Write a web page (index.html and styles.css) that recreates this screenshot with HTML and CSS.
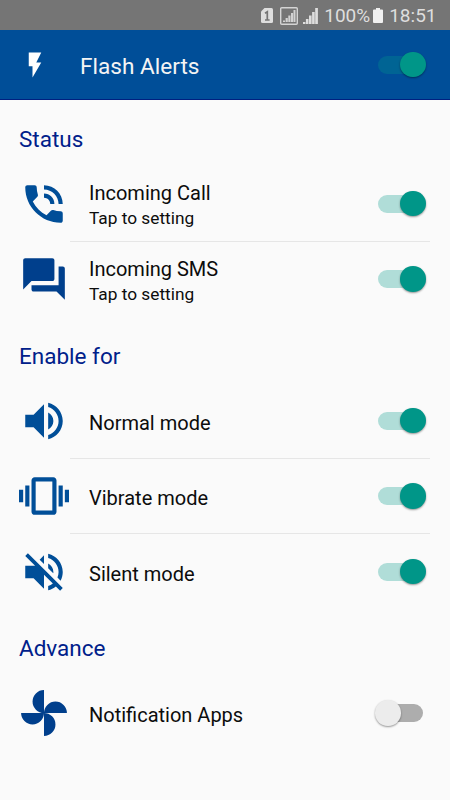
FILE: index.html
```html
<!DOCTYPE html>
<html lang="en">
<head>
<meta charset="utf-8">
<title>Flash Alerts</title>
<link rel="stylesheet" href="styles.css">
</head>
<body>
<div class="statusbar">
  <svg class="sim" viewBox="0 0 12 15"><path d="M3.500 0H10.500Q12 0 12 1.500V13.500Q12 15 10.500 15H1.500Q0 15 0 13.500V3.500Z" fill="#dedede"/><path d="M4 5.200L6.300 3.800V12M4 12H8.600" fill="none" stroke="#757575" stroke-width="1.700"/></svg>
  <svg class="boxed" viewBox="0 0 18 18"><rect x=".7" y=".7" width="16.600" height="16.600" rx="1" fill="none" stroke="#d4d4d4" stroke-width="1.400"/><path d="M3 15v-1.500h2v1.500zM5.600 15v-4h2.200v4zM8.300 15v-6.500h2.200v6.500zM11 15v-9h2.100v9zM13.500 15v-12h2v12z" fill="#d2d2d2"/></svg>
  <svg class="signal" viewBox="0 0 15 16"><path d="M0 16v-2h2.400v2zM2.900 16v-5h2.600v5zM6 16v-8.500h2.600v8.500zM9.100 16v-12h2.600v12zM12.200 16v-16h2.700v16z" fill="#dedede"/></svg>
  <span class="percent">100%</span>
  <svg class="battery" viewBox="0 0 10 15"><path d="M3 0h4v1.500h2q1 0 1 1v11.500q0 1-1 1h-8q-1 0-1-1v-11.500q0-1 1-1h2z" fill="#f0f0f0"/></svg>
  <span class="clock">18:51</span>
</div>
<header class="appbar">
  <svg class="flash" viewBox="0 0 24 24"><path d="M7 2v11h3v9l7-12h-4l4-8z"/></svg>
  <h1>Flash Alerts</h1>
  <span class="switch on"></span>
</header>
<main>
  <h2>Status</h2>
  <section class="group">
    <div class="row">
      <svg class="icon" viewBox="0 0 24 24"><path d="M20 15.500c-1.250 0-2.450-.2-3.570-.57-.35-.11-.74-.03-1.020.24l-2.200 2.200c-2.830-1.440-5.150-3.750-6.590-6.590l2.200-2.210c.28-.26.36-.65.25-1C8.700 6.450 8.500 5.250 8.500 4c0-.55-.45-1-1-1H4c-.55 0-1 .45-1 1 0 9.390 7.610 17 17 17 .55 0 1-.45 1-1v-3.500c0-.55-.45-1-1-1zM19 12h2c0-4.970-4.030-9-9-9v2c3.870 0 7 3.130 7 7zm-4 0h2c0-2.760-2.240-5-5-5v2c1.660 0 3 1.340 3 3z"/></svg>
      <div class="label"><p class="title">Incoming Call</p><p class="sub">Tap to setting</p></div>
      <span class="switch on"></span>
    </div>
    <div class="row">
      <svg class="icon deep" viewBox="0 0 24 24"><path d="M21 6h-2v9H6v2c0 .55.45 1 1 1h11l4 4V7c0-.55-.45-1-1-1zm-4 6V3c0-.55-.45-1-1-1H3c-.55 0-1 .45-1 1v14l4-4h10c.55 0 1-.45 1-1z"/></svg>
      <div class="label"><p class="title">Incoming SMS</p><p class="sub">Tap to setting</p></div>
      <span class="switch on"></span>
    </div>
  </section>
  <h2>Enable for</h2>
  <section class="group">
    <div class="row">
      <svg class="icon" viewBox="0 0 24 24"><path d="M3 9v6h4l5 5V4L7 9H3zm13.500 3c0-1.770-1.020-3.290-2.500-4.030v8.050c1.480-.73 2.500-2.250 2.500-4.020zM14 3.230v2.060c2.890.86 5 3.540 5 6.710s-2.110 5.850-5 6.710v2.060c4.010-.91 7-4.490 7-8.770s-2.990-7.860-7-8.770z"/></svg>
      <div class="label single"><p class="title">Normal mode</p></div>
      <span class="switch on"></span>
    </div>
    <div class="row">
      <svg class="icon" viewBox="0 0 24 24"><path d="M0 15h2V9H0v6zm3 2h2V7H3v10zm19-8v6h2V9h-2zm-3 8h2V7h-2v10zM16.500 3h-9C6.670 3 6 3.670 6 4.500v15c0 .83.67 1.500 1.500 1.500h9c.83 0 1.500-.67 1.500-1.500v-15c0-.83-.67-1.500-1.500-1.500zM16 19H8V5h8v14z"/></svg>
      <div class="label single"><p class="title">Vibrate mode</p></div>
      <span class="switch on"></span>
    </div>
    <div class="row">
      <svg class="icon" viewBox="0 0 24 24"><path d="M16.500 12c0-1.770-1.020-3.290-2.500-4.030v2.210l2.450 2.450c.03-.2.050-.41.050-.63zm2.500 0c0 .94-.2 1.820-.54 2.640l1.510 1.510C20.630 14.910 21 13.500 21 12c0-4.280-2.990-7.860-7-8.770v2.060c2.890.86 5 3.540 5 6.710zM4.270 3L3 4.270 7.730 9H3v6h4l5 5v-6.730l4.250 4.250c-.67.52-1.420.93-2.250 1.180v2.060c1.380-.31 2.630-.95 3.690-1.810L19.730 21 21 19.730l-9-9L4.270 3zM12 4L9.910 6.090 12 8.180V4z"/></svg>
      <div class="label single"><p class="title">Silent mode</p></div>
      <span class="switch on"></span>
    </div>
  </section>
  <h2 class="last">Advance</h2>
  <section class="group">
    <div class="row">
      <svg class="icon deep" viewBox="0 0 24 24"><path d="M12 12A5.500 5.500 0 0 1 12 1zM12 12A5.500 5.500 0 0 1 23 12zM12 12A5.500 5.500 0 0 1 12 23zM12 12A5.500 5.500 0 0 1 1 12z"/></svg>
      <div class="label single"><p class="title">Notification Apps</p></div>
      <span class="switch off"></span>
    </div>
  </section>
</main>
</body>
</html>
```

FILE: styles.css
```css
* { box-sizing: border-box; margin: 0; padding: 0; }
body {
  height: 800px;
  background: #fafafa;
  color: #0c0c0c;
  font-family: Roboto, "Liberation Sans", sans-serif;
  overflow: hidden;
}
svg { display: block; flex: none; }
.statusbar {
  height: 30px;
  padding: 1px 13.500px 0 0;
  display: flex;
  align-items: center;
  justify-content: flex-end;
  background: #757575;
  color: #dedede;
  font-size: 19px;
}
.sim { width: 12px; height: 15px; margin-right: 7px; }
.boxed { width: 18px; height: 18px; margin-right: 5px; }
.signal { width: 15px; height: 16px; margin-right: 6px; }
.battery { width: 10px; height: 15px; margin: 0 6px 0 3px; }
.appbar {
  height: 70px;
  padding: 0 25px 0 20px;
  display: flex;
  align-items: center;
  background: #004e98;
  border-bottom: 1px solid #002080;
  color: #f4f4f4;
}
.flash { width: 30px; height: 30px; fill: #fff; }
.appbar h1 { flex: 1; margin: 3px 0 0 30px; font-size: 22.600px; font-weight: 400; }
h2 {
  height: 66px;
  padding: 13px 0 0 19px;
  line-height: 53px;
  font-size: 22.500px;
  font-weight: 400;
  color: #00208a;
}
h2.last { padding-top: 12px; }
.row {
  height: 75.500px;
  padding: 0 25px 0 19px;
  display: flex;
  align-items: center;
  background: linear-gradient(#e6e6e6, #e6e6e6) 70px 100% / 360px 1px no-repeat;
}
.row:last-child { background: none; }
.icon { width: 50px; height: 50px; fill: #004e98; }
.icon.deep { fill: #003f8c; }
.label { flex: 1; margin-left: 20px; padding-top: 3px; }
.label.single { padding-top: 4px; }
.title { font-size: 20px; line-height: 26px; }
.sub { font-size: 17.300px; line-height: 24px; }
.switch {
  position: relative;
  flex: none;
  width: 45px;
  height: 18px;
  margin-right: 2px;
  border-radius: 9px;
  background: #b0ddd8;
}
.switch::after {
  content: "";
  position: absolute;
  top: -3.800px;
  left: 22.200px;
  width: 25.500px;
  height: 25.500px;
  border-radius: 50%;
  background: #009688;
  box-shadow: 0 1px 2px rgba(0, 0, 0, .4);
}
.appbar .switch { background: #006494; }
.switch.off { background: #adadad; }
.switch.off::after { left: -2.800px; background: #ececec; }
```
